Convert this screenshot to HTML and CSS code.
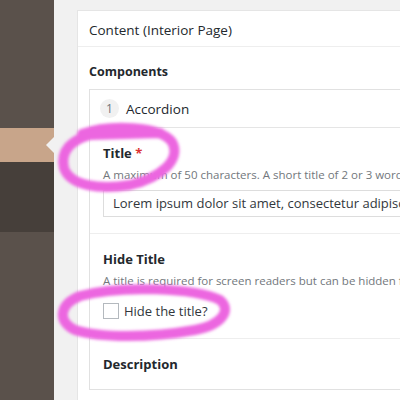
FILE: index.html
```html
<!DOCTYPE html>
<html>
<head>
<meta charset="utf-8">
<link rel="stylesheet" href="styles.css">
</head>
<body>
<div class="page">
  <aside class="sidebar">
    <div class="band band-top"></div>
    <div class="band band-active"><span class="pointer"></span></div>
    <div class="band band-sub"></div>
    <div class="band band-rest"></div>
  </aside>
  <main class="main">
    <section class="panel">
      <header class="panel-head">Content (Interior Page)</header>
      <div class="panel-body">
        <h3 class="section-title">Components</h3>
        <div class="accordion">
          <div class="acc-head"><span class="num">1</span><span class="acc-name">Accordion</span></div>
          <div class="field">
            <div class="label">Title <span class="req">*</span></div>
            <div class="desc">A maximum of 50 characters. A short title of 2 or 3 words</div>
            <div class="input">Lorem ipsum dolor sit amet, consectetur adipiscing</div>
          </div>
          <div class="field field-check">
            <div class="label">Hide Title</div>
            <div class="desc">A title is required for screen readers but can be hidden from view</div>
            <label class="check"><span class="box"></span>Hide the title?</label>
          </div>
          <div class="field">
            <div class="label">Description</div>
          </div>
        </div>
      </div>
    </section>
  </main>
</div>
<svg class="marks" width="400" height="400" viewBox="0 0 400 400">
  <defs><filter id="soft"><feGaussianBlur stdDeviation="1.6"/></filter></defs>
  <g fill="none" stroke="#ec66e0" stroke-width="10" stroke-linecap="round" filter="url(#soft)">
    <path d="M82 134 C110 124 160 126 172 142 C182 160 160 178 130 185 C100 190 70 186 64 168 C60 150 72 140 90 135 L160 133"/>
    <path d="M80 296 C120 285 195 288 220 300 C232 310 222 325 195 330 C150 338 100 338 75 330 C58 322 58 305 80 296"/>
  </g>
</svg>
</body>
</html>
```
FILE: styles.css
```css
html, body {
  margin: 0;
  padding: 0;
  width: 400px;
  height: 400px;
  overflow: hidden;
}
body {
  font-family: "Open Sans", "Noto Sans", sans-serif;
  color: #23282d;
  background: #f1f1f1;
  position: relative;
}
.page {
  display: flex;
  height: 400px;
}
.sidebar {
  width: 54px;
  flex: none;
  display: flex;
  flex-direction: column;
}
.band-top { height: 128px; background: #5a514b; }
.band-active { height: 34px; background: #c8a58a; position: relative; }
.band-sub { height: 70px; background: #463f3a; }
.band-rest { flex: 1; background: #5a514b; }
.pointer {
  position: absolute;
  right: 0;
  top: 9px;
  width: 0;
  height: 0;
  border-top: 8px solid transparent;
  border-bottom: 8px solid transparent;
  border-right: 8px solid #f1f1f1;
}
.main {
  flex: 1;
  padding: 10px 0 0 23px;
  overflow: hidden;
}
.panel {
  width: 420px;
  background: #fff;
  border: 1px solid #e5e5e5;
  height: 420px;
}
.panel-head {
  height: 35px;
  line-height: 38px;
  padding-left: 11px;
  font-size: 13.5px;
  border-bottom: 1px solid #eee;
  white-space: nowrap;
}
.panel-body {
  padding: 16px 0 0 11px;
}
.section-title {
  margin: 0 0 8px;
  font-size: 12.5px;
  font-weight: 700;
  line-height: 18px;
}
.accordion {
  border: 1px solid #e1e1e1;
}
.acc-head {
  height: 37px;
  border-bottom: 1px solid #e5e5e5;
  display: flex;
  align-items: center;
  padding-left: 10px;
  gap: 7px;
}
.num {
  width: 19px;
  height: 19px;
  border-radius: 50%;
  background: #f1f1f1;
  color: #72777c;
  font-size: 12px;
  display: flex;
  align-items: center;
  justify-content: center;
}
.acc-name {
  font-size: 13.5px;
}
.field {
  padding: 16px 0 16px 13px;
  border-bottom: 1px solid #eee;
}
.field-check { padding-bottom: 18px; }
.field:last-child { border-bottom: none; }
.label {
  font-size: 13px;
  font-weight: 700;
  line-height: 18px;
  white-space: nowrap;
}
.req { color: #dc3232; }
.desc {
  margin-top: 5px;
  font-size: 11.5px;
  color: #72777c;
  line-height: 16px;
  white-space: nowrap;
}
.input {
  margin-top: 7px;
  height: 25px;
  line-height: 25px;
  border: 1px solid #ddd;
  padding-left: 9px;
  font-size: 13px;
  color: #32373c;
  white-space: nowrap;
  overflow: hidden;
}
.check {
  margin-top: 13px;
  display: flex;
  align-items: center;
  gap: 5px;
  font-size: 13px;
  color: #32373c;
}
.box {
  width: 14px;
  height: 14px;
  border: 1px solid #b4b9be;
  background: #fff;
}
.marks {
  position: absolute;
  left: 0;
  top: 0;
  pointer-events: none;
}
```
